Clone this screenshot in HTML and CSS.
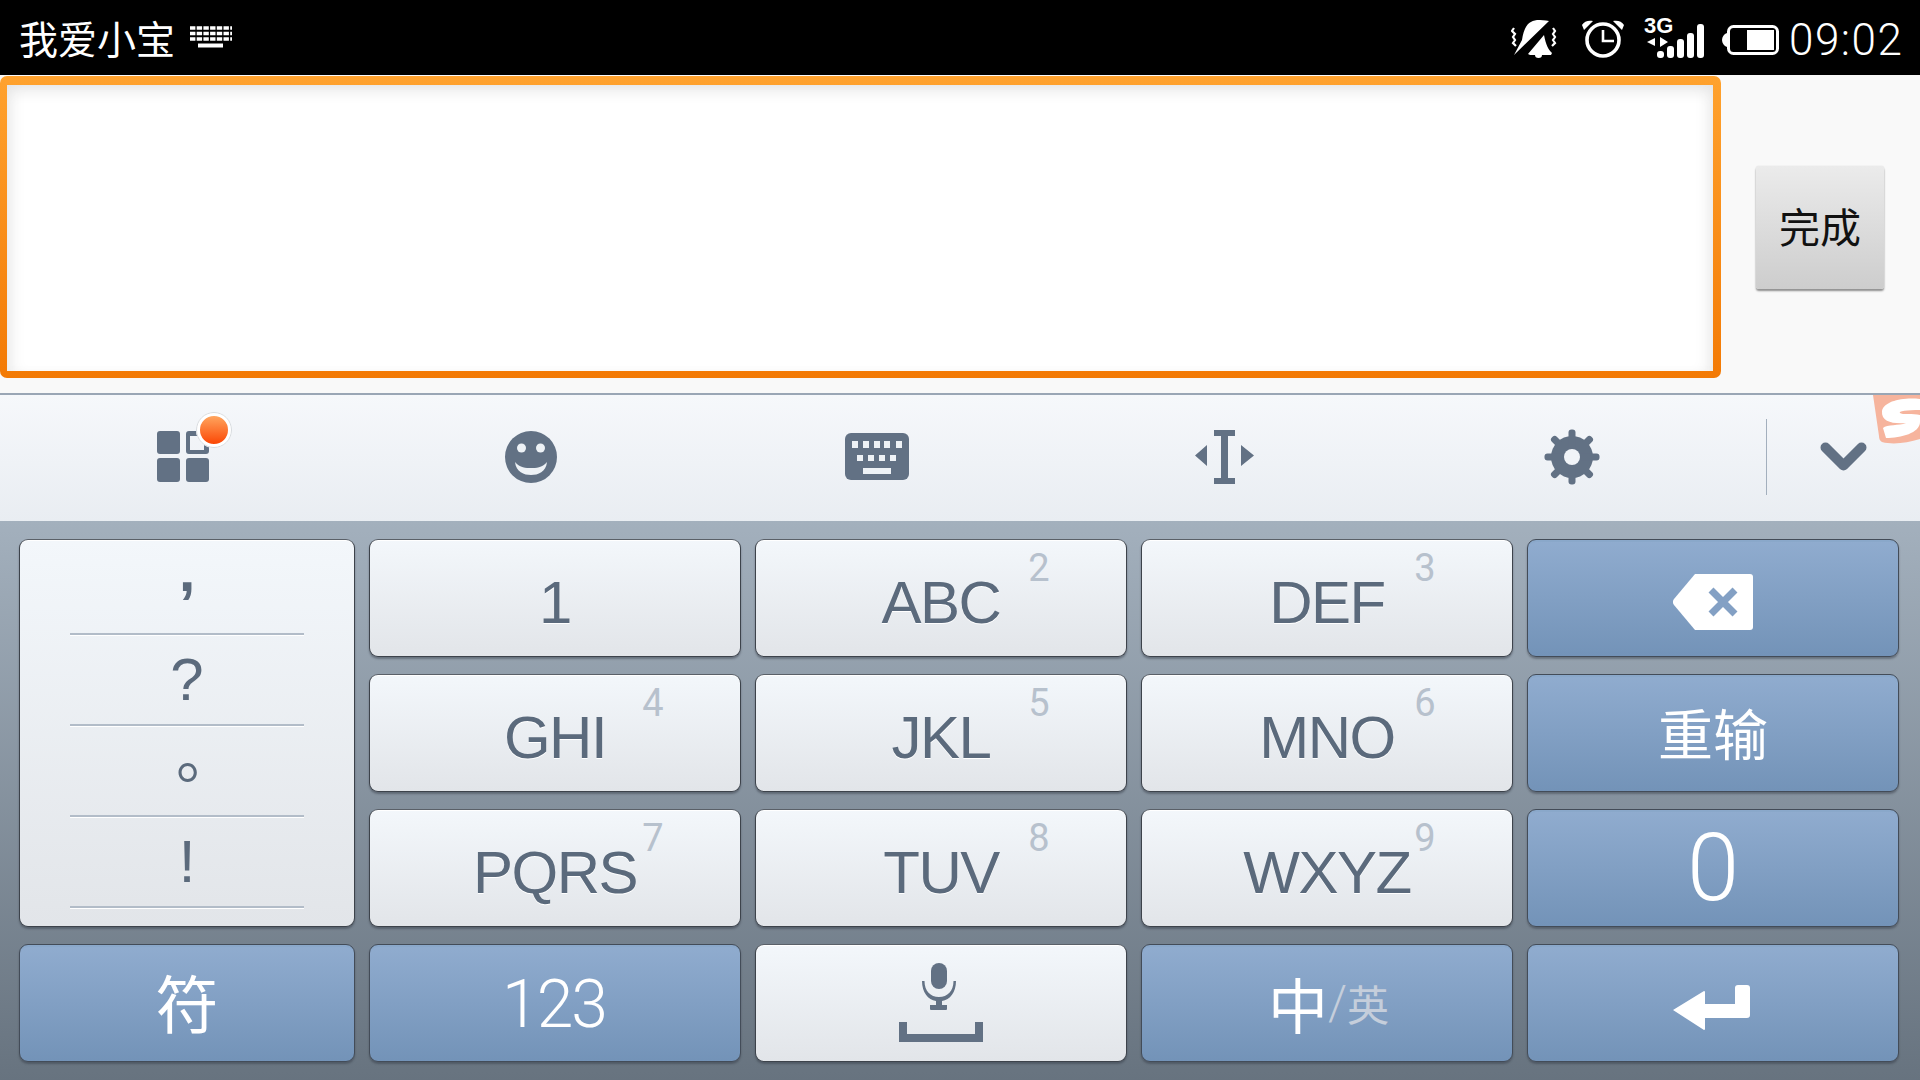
FILE: index.html
```html
<!DOCTYPE html>
<html lang="zh">
<head>
<meta charset="utf-8">
<title>我爱小宝</title>
<link rel="stylesheet" href="styles.css">
</head>
<body>
<div class="screen">
  <header class="status">
    <div class="status-left">
      <span class="status-title">我爱小宝</span>
      <svg class="ic-kb-small" width="42" height="22" viewBox="0 0 42 22">
        <g stroke="#fff" stroke-width="3.4" fill="none">
          <path d="M0 2H42M0 7.500H42M0 13H42" stroke-dasharray="5.400 1.300"/>
          <path d="M8 19.500H33" stroke-width="4"/>
        </g>
      </svg>
    </div>
    <div class="status-right">
      <svg class="ic-mute" width="46" height="38" viewBox="0 0 46 38">
        <g fill="#fff">
          <path d="M3 35 11 20C13 6 18 1 26 0 30 0 34 0 38 1z"/>
          <path d="M17 34 33 15C35 25 37 29 41 33L40 35H19z"/>
          <path d="M24 35h7a3.500 3 0 0 1-7 0z"/>
        </g>
        <path d="M3 8 1 11l3 3-2 3 2 3-2 3 3 3M42 8l2 3-2 3 2 3-2 3 2 3-3 3" stroke="#fff" stroke-width="2.200" fill="none"/>
      </svg>
      <svg class="ic-alarm" width="44" height="38" viewBox="0 0 44 38">
        <circle cx="22" cy="20" r="16" fill="none" stroke="#fff" stroke-width="3.600"/>
        <path d="M22 10V21H33" fill="none" stroke="#fff" stroke-width="2.600"/>
        <path d="M1 5C3 1 8 0 12 1L3 10zM43 5C41 1 36 0 32 1L41 10z" fill="#fff"/>
      </svg>
      <svg class="ic-signal" width="60" height="40" viewBox="0 0 60 40">
        <text x="0" y="15" class="signal-3g">3G</text>
        <path d="M3 24 11 20V28zM24 24 16 19V29z" fill="#fff"/>
        <g fill="#fff">
          <rect x="13" y="33" width="7" height="7" rx="3"/>
          <rect x="23" y="28" width="7" height="12" rx="3"/>
          <rect x="33" y="21" width="7" height="19" rx="3"/>
          <rect x="43" y="15" width="7" height="25" rx="3"/>
          <rect x="53" y="6" width="7" height="34" rx="3"/>
        </g>
      </svg>
      <svg class="ic-battery" width="57" height="30" viewBox="0 0 57 30">
        <path d="M5 8C2 9 0 12 0 15s2 6 5 7z" fill="#fff"/>
        <rect x="6.500" y="1.500" width="49" height="27" rx="5" fill="none" stroke="#fff" stroke-width="3"/>
        <rect x="25" y="5" width="27" height="20" fill="#fff"/>
      </svg>
      <span class="status-time">09:02</span>
    </div>
  </header>

  <section class="editor">
    <div class="input-frame"><div class="input-field"></div></div>
    <div class="done-btn">完成</div>
  </section>

  <nav class="toolbar">
    <div class="tool">
      <span class="apps-wrap">
        <svg width="52" height="51" viewBox="0 0 52 51">
          <g fill="#627184">
            <rect x="0" y="0" width="23" height="23" rx="3"/>
            <rect x="0" y="27" width="23" height="24" rx="3"/>
            <rect x="29" y="27" width="23" height="24" rx="3"/>
            <path d="M32 0h17a3 3 0 0 1 3 3v17a3 3 0 0 1-3 3H32a3 3 0 0 1-3-3V3a3 3 0 0 1 3-3zm1 5v14h14V5z" fill-rule="evenodd"/>
          </g>
        </svg>
        <span class="apps-badge"></span>
      </span>
    </div>
    <div class="tool">
      <svg width="52" height="52" viewBox="0 0 52 52">
        <circle cx="26" cy="26" r="26" fill="#627184"/>
        <ellipse cx="16.500" cy="17" rx="4.500" ry="4.500" fill="#eef2f6"/>
        <ellipse cx="35.500" cy="17" rx="4.500" ry="4.500" fill="#eef2f6"/>
        <path d="M10 31C15 37 21 37 26 37s11 0 16-6c-1 10-9 13-16 13S11 41 10 31z" fill="#eef2f6"/>
      </svg>
    </div>
    <div class="tool tool-kb">
      <svg width="64" height="47" viewBox="0 0 64 47">
        <rect width="64" height="47" rx="6" fill="#627184"/>
        <g fill="#eef2f6">
          <rect x="7" y="8" width="6" height="7"/><rect x="18" y="8" width="6" height="7"/><rect x="29" y="8" width="6" height="7"/><rect x="39" y="8" width="6" height="7"/><rect x="51" y="8" width="6" height="7"/>
          <rect x="12" y="22" width="6" height="6"/><rect x="23" y="22" width="6" height="6"/><rect x="34" y="22" width="6" height="6"/><rect x="45" y="22" width="6" height="6"/>
          <rect x="18" y="35" width="28" height="6"/>
        </g>
      </svg>
    </div>
    <div class="tool">
      <svg width="59" height="54" viewBox="0 0 59 54">
        <g fill="#627184">
          <path d="M19 0H40V6H33V48H40V54H19V48H26V6H19z"/>
          <path d="M12 15V36L0 25.500zM46 15V36L59 25.500z"/>
        </g>
      </svg>
    </div>
    <div class="tool">
      <svg width="56" height="56" viewBox="-28 -28 56 56">
        <g fill="#627184">
          <circle r="21"/>
          <rect x="-3.500" y="-27.500" width="7" height="55" rx="3"/>
          <rect x="-27.500" y="-3.500" width="55" height="7" rx="3"/>
          <rect x="-3.500" y="-28" width="7" height="56" rx="3" transform="rotate(45)"/>
          <rect x="-3.500" y="-28" width="7" height="56" rx="3" transform="rotate(-45)"/>
        </g>
        <circle r="8" fill="#f1f4f8"/>
      </svg>
    </div>
    <div class="tool-last">
      <svg width="47" height="29" viewBox="0 0 47 29">
        <path d="M5.500 5.500 23.500 23.500 41.500 5.500" fill="none" stroke="#627184" stroke-width="10" stroke-linecap="round" stroke-linejoin="round"/>
      </svg>
    </div>
    <svg class="sogou" width="47" height="54" viewBox="0 0 47 54">
      <path d="M0 0H47V44C34 48 20 50 9 47 7 46 6 44 6 41z" fill="#f6b49d"/>
      <path d="M47 4C30 2 11 6 9 16 8 27 20 29 33 28 26 31 14 29 10 33L13 43C28 43 47 38 47 27V20C40 18 29 20 27 18S34 15 47 15z" fill="#fff"/>
    </svg>
  </nav>

  <main class="keyboard">
    <div class="key key-light key-symbols">
      <div class="sym sym-comma">,</div>
      <div class="sym">?</div>
      <div class="sym sym-dot">。</div>
      <div class="sym">!</div>
    </div>
    <div class="key key-light"><span class="lbl">1</span></div>
    <div class="key key-light"><span class="lbl">ABC</span><span class="sub">2</span></div>
    <div class="key key-light"><span class="lbl">DEF</span><span class="sub">3</span></div>
    <div class="key key-blue">
      <svg class="ic-low" width="80" height="56" viewBox="0 0 80 56">
        <path d="M22 0H77a3 3 0 0 1 3 3V53a3 3 0 0 1-3 3H22L1 31a5 5 0 0 1 0-6z" fill="#fff"/>
        <path d="M38 16 62 40M62 16 38 40" stroke="#83a0c4" stroke-width="7"/>
      </svg>
    </div>

    <div class="key key-light"><span class="lbl">GHI</span><span class="sub">4</span></div>
    <div class="key key-light"><span class="lbl">JKL</span><span class="sub">5</span></div>
    <div class="key key-light"><span class="lbl">MNO</span><span class="sub">6</span></div>
    <div class="key key-blue"><span class="cjk-key">重输</span></div>

    <div class="key key-light"><span class="lbl">PQRS</span><span class="sub">7</span></div>
    <div class="key key-light"><span class="lbl">TUV</span><span class="sub">8</span></div>
    <div class="key key-light"><span class="lbl">WXYZ</span><span class="sub">9</span></div>
    <div class="key key-blue"><span class="zero">0</span></div>

    <div class="key key-blue"><span class="cjk-key cjk-fu">符</span></div>
    <div class="key key-blue"><span class="num-key">123</span></div>
    <div class="key key-light">
      <svg width="84" height="80" viewBox="0 0 84 80">
        <g fill="#627184">
          <rect x="32" y="0" width="16" height="26" rx="8"/>
          <path d="M23 18h2.500c0 10 6 16 14.500 16S54.500 28 54.500 18H57c0 11-6 19-14 20v4h5v4a1 1 0 0 1-1 1H32a1 1 0 0 1-1-1v-4h6v-4C29 37 23 29 23 18z"/>
          <path d="M0 59H8V71H76V59H84V79H0z"/>
        </g>
      </svg>
    </div>
    <div class="key key-blue">
      <span class="lang"><span class="lang-zh">中</span><span class="lang-slash">/</span><span class="lang-en">英</span></span>
    </div>
    <div class="key key-blue">
      <svg class="ic-low ic-enter" width="77" height="45" viewBox="0 0 77 45">
        <path d="M0 25 31 6a1 1 0 0 1 1 1V19H62V3a3 3 0 0 1 3-3H74a3 3 0 0 1 3 3V30a3 3 0 0 1-3 3H32V44a1 1 0 0 1-1 1z" fill="#fff"/>
      </svg>
    </div>
  </main>
</div>
</body>
</html>
```

FILE: styles.css
```css
* { box-sizing: border-box; }

html, body {
  margin: 0;
  padding: 0;
  background: #000;
}

.screen {
  width: 1920px;
  height: 1080px;
  overflow: hidden;
  display: flex;
  flex-direction: column;
  font-family: Roboto, "Liberation Sans", "Noto Sans CJK SC", sans-serif;
}

/* status bar */
.status {
  height: 75px;
  flex: none;
  background: #000;
  color: #fff;
  display: flex;
  align-items: center;
  justify-content: space-between;
  padding: 0 23px 0 19px;
}

.status-left {
  display: flex;
  align-items: center;
}

.status-title {
  font-family: "Noto Sans CJK SC", sans-serif;
  font-size: 39px;
  line-height: 75px;
  font-weight: 400;
}

.ic-kb-small { margin: -2px 0 0 15px; }

.status-right {
  display: flex;
  align-items: center;
}

.ic-mute { margin: 2px 24px 0 0; }
.ic-alarm { margin: 2px 19px 0 0; }
.ic-signal { margin: 0 18px 0 0; overflow: visible; }
.ic-battery { margin: 5px 10px 0 0; }

.signal-3g {
  font-family: "Liberation Sans", sans-serif;
  font-weight: 700;
  font-size: 22px;
  fill: #fff;
}

.status-time {
  font-size: 44px;
  font-weight: 300;
  letter-spacing: 1.500px;
  line-height: 75px;
  width: 108px;
  padding-top: 5px;
  white-space: nowrap;
}

/* editor */
.editor {
  height: 318px;
  flex: none;
  background: #f9f9f9;
  display: flex;
  align-items: center;
  padding: 1px 0 15px;
}

.input-frame {
  width: 1721px;
  height: 302px;
  flex: none;
  padding: 9px 8px 7px 7px;
  border-radius: 7px;
  background: linear-gradient(#ffa22e, #f37a05);
}

.input-field {
  height: 100%;
  background: #fff;
  box-shadow: inset 0 10px 16px -6px #e2e2e2, inset 12px 0 16px -8px #ececec, inset -12px 0 16px -8px #ececec;
}

.done-btn {
  margin-left: 35px;
  width: 128px;
  height: 123px;
  padding-bottom: 4px;
  display: flex;
  align-items: center;
  justify-content: center;
  font-family: "Noto Sans CJK SC", sans-serif;
  font-size: 41px;
  color: #111;
  border-radius: 3px;
  background: linear-gradient(#ebebeb, #cdcdcd);
  box-shadow: 0 0 1px #bdbdbd, 0 2px 2px #8c8c8c;
}

/* toolbar */
.toolbar {
  position: relative;
  height: 128px;
  flex: none;
  border-top: 2px solid #9aa6b5;
  background: linear-gradient(#f6f8fb, #e9edf2);
  display: flex;
  align-items: center;
  padding: 0 0 3px 10px;
}

.tool {
  width: 347px;
  flex: none;
  display: flex;
  justify-content: center;
}

.tool-kb { padding-right: 2px; }

.tool-last {
  margin-left: 21px;
  flex: 1;
  height: 76px;
  border-left: 1px solid #a3afbd;
  display: flex;
  align-items: center;
  justify-content: center;
}

.apps-wrap {
  position: relative;
  display: block;
  width: 52px;
  height: 51px;
  margin-right: 2px;
}

.apps-wrap svg { display: block; }

.apps-badge {
  position: absolute;
  left: 39px;
  top: -19px;
  width: 36px;
  height: 36px;
  border-radius: 50%;
  border: 4px solid #fff;
  outline: 1px solid #d8dce0;
  outline-offset: -1px;
  background: linear-gradient(#ffa55e, #fb4705);
}

.sogou {
  position: absolute;
  right: 0;
  top: 0;
}

/* keyboard */
.keyboard {
  flex: 1;
  background: linear-gradient(#a3b0bd, #67737f);
  padding: 18px 21px 0 19px;
  display: grid;
  grid-template-columns: 336px repeat(4, 372px);
  grid-auto-rows: 118px;
  column-gap: 14px;
  row-gap: 17px;
}

.key {
  position: relative;
  border-radius: 9px;
  display: flex;
  align-items: center;
  justify-content: center;
}

.key-light {
  border: 1px solid #3d434b;
  border-top-color: #5a6068;
  background: linear-gradient(#f3f7fb, #e2e5e9);
  box-shadow: inset 0 1px 0 #fff, 0 2px 2px rgba(50, 58, 68, .45);
  color: #5b6a7c;
}

.key-blue {
  border: 1px solid #434c58;
  background: linear-gradient(#90accf, #7393b8);
  box-shadow: inset 0 3px 0 -1px #8aa8ca, 0 2px 2px rgba(50, 58, 68, .45);
  color: #fff;
}

.ic-low { margin-top: 8px; }
.ic-enter { margin-right: 3px; }

.key-symbols {
  grid-row: span 3;
  flex-direction: column;
  align-items: stretch;
  justify-content: flex-start;
  padding: 4px 50px 0;
}

.sym {
  flex: 0 0 91px;
  height: 91px;
  min-height: 0;
  display: flex;
  align-items: center;
  justify-content: center;
  font-family: "Liberation Sans", sans-serif;
  font-size: 60px;
  line-height: 1;
  color: #5b6a7c;
  border-bottom: 2px solid #b2bcc8;
  box-shadow: 0 1px 0 #fff;
}

.sym-comma {
  padding-bottom: 35px;
  font-weight: 700;
}

.sym-dot {
  font-family: "Noto Sans CJK SC", sans-serif;
  padding: 0 0 37px 38px;
}

.lbl {
  font-family: "Liberation Sans", sans-serif;
  font-size: 60px;
  letter-spacing: -1.500px;
  line-height: 1;
  padding-top: 10px;
  text-shadow: 0 1px 0 #fff;
}

.sub {
  position: absolute;
  left: 268px;
  top: 6px;
  width: 30px;
  text-align: center;
  font-size: 38px;
  font-weight: 400;
  line-height: 44px;
  color: #b7c1cd;
}

.cjk-key {
  font-family: "Noto Sans CJK SC", sans-serif;
  font-size: 55px;
  line-height: 1;
  padding-bottom: 4px;
  color: #fff;
}

.cjk-fu {
  font-size: 63px;
  padding-bottom: 6px;
}

.zero {
  font-size: 94px;
  font-weight: 300;
  line-height: 1;
}

.num-key {
  font-size: 66px;
  font-weight: 300;
  line-height: 1;
  letter-spacing: -2px;
  padding: 4px 2px 0 0;
}

.lang {
  display: flex;
  align-items: center;
  font-family: "Noto Sans CJK SC", sans-serif;
  line-height: 1;
  padding-left: 3px;
}

.lang-zh { font-size: 60px; color: #fff; }
.lang-slash { font-size: 48px; color: #c5cedb; font-family: Roboto, sans-serif; font-weight: 300; }
.lang-en { font-size: 42px; color: #c5cedb; }
```
